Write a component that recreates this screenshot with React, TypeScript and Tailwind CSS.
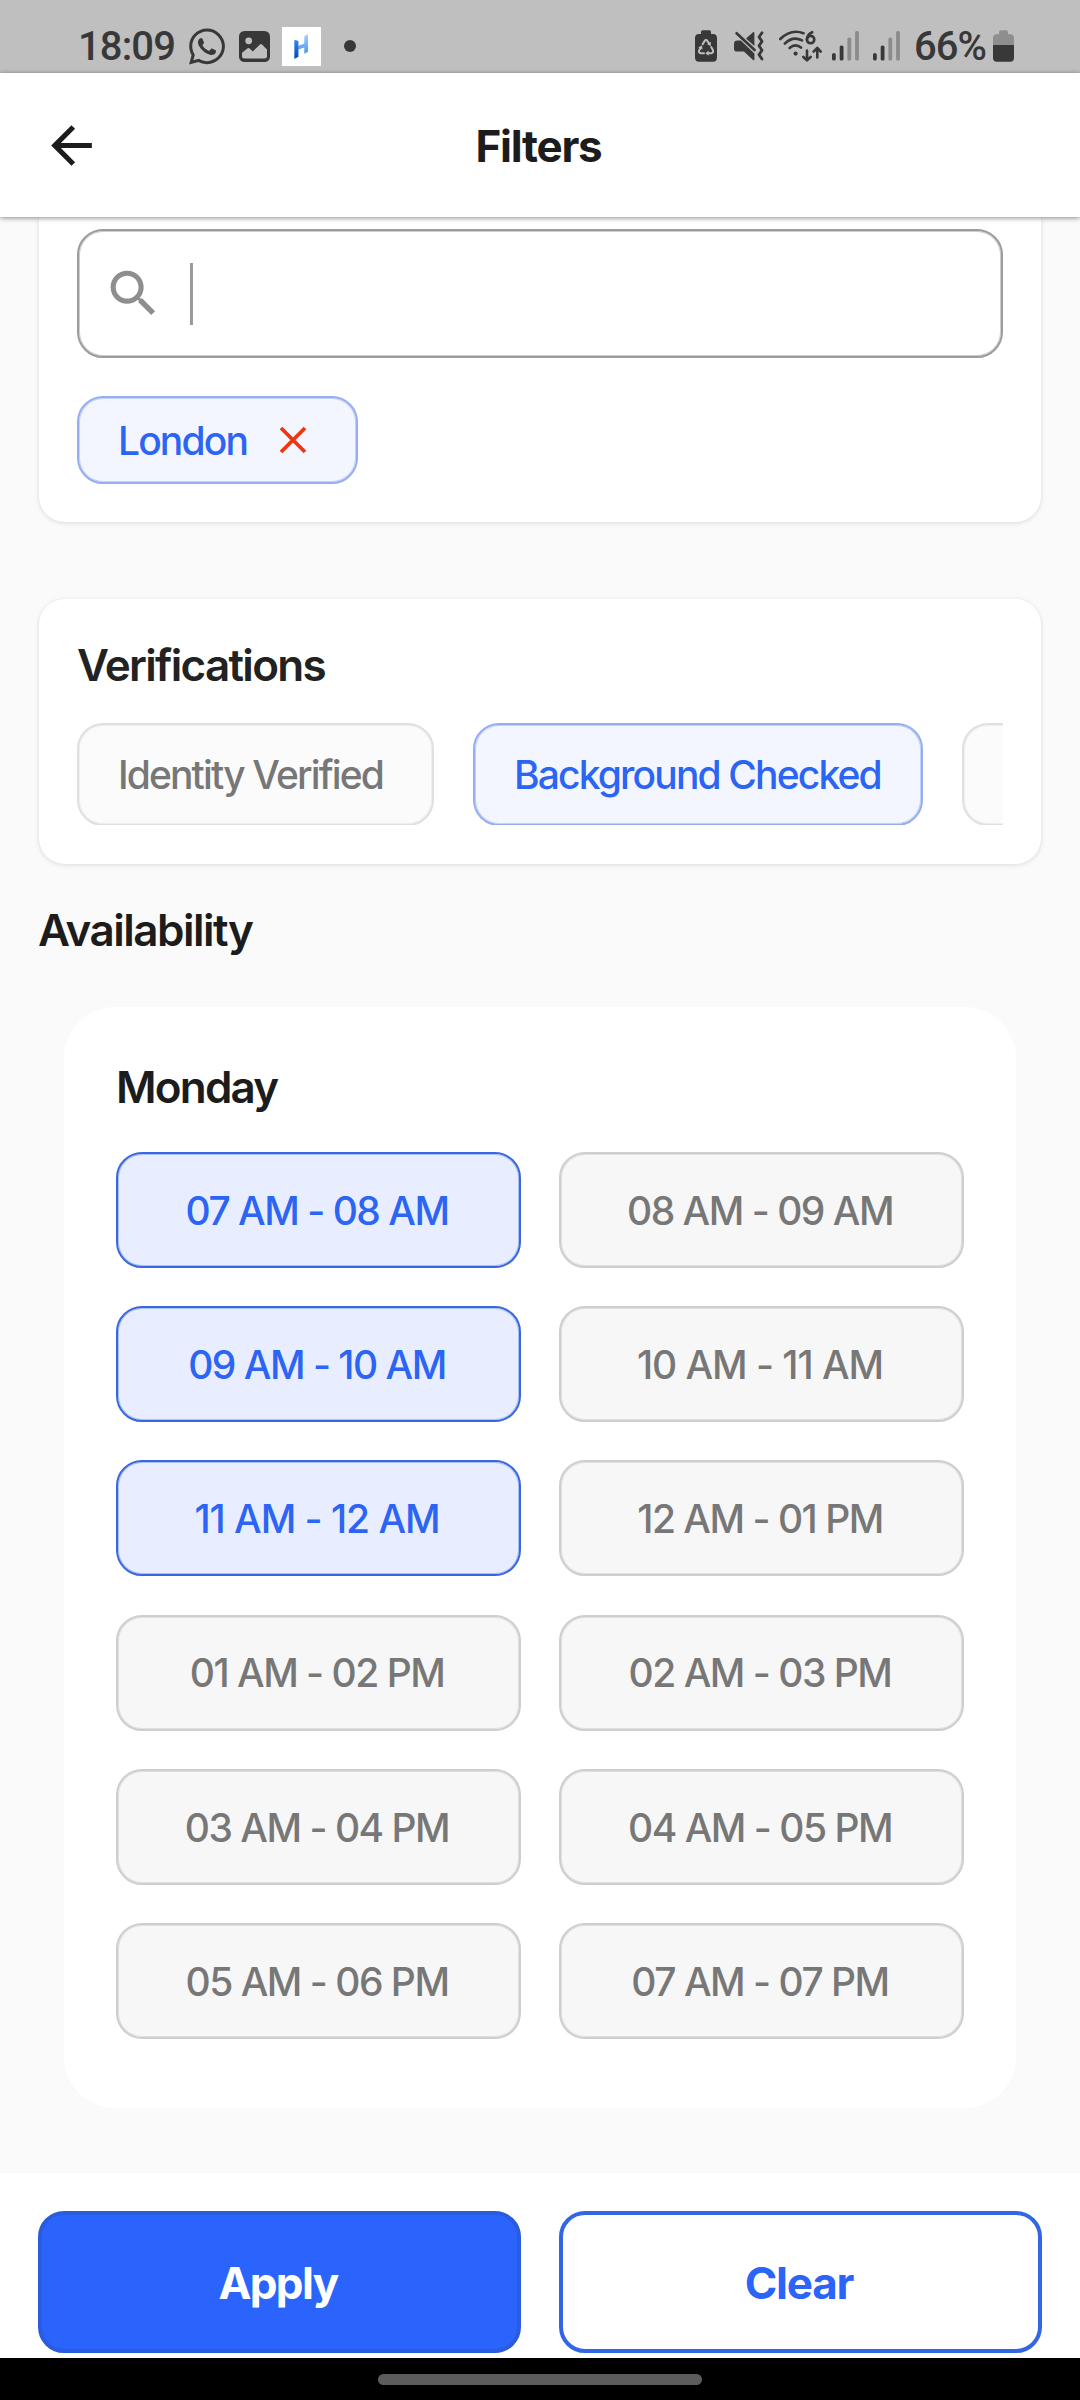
import { FaWhatsapp } from "react-icons/fa6";

type Slot = { label: string; selected?: boolean; loose?: boolean };

const slots: Slot[] = [
  { label: "07 AM - 08 AM", selected: true },
  { label: "08 AM - 09 AM" },
  { label: "09 AM - 10 AM", selected: true },
  { label: "10 AM - 11 AM", loose: true },
  { label: "11 AM - 12 AM", selected: true, loose: true },
  { label: "12 AM - 01 PM" },
  { label: "01 AM - 02 PM" },
  { label: "02 AM - 03 PM" },
  { label: "03 AM - 04 PM" },
  { label: "04 AM - 05 PM" },
  { label: "05 AM - 06 PM" },
  { label: "07 AM - 07 PM" },
];

function ImageIcon() {
  return (
    <svg className="ml-[14px] h-[31px] w-[31px]" viewBox="0 0 31 31">
      <rect width="31" height="31" rx="5.5" fill="#383838" />
      <circle cx="9.7" cy="9.8" r="3.4" fill="#bfbfbf" />
      <path
        d="M3 21.8 L8.6 17.2 Q9.6 16.6 10.6 17.4 L13.8 20.4 L21 13.4 Q22 12.6 23 13.4 L28 18.5 V25 Q28 27.5 25.5 27.5 H5.5 Q3 27.5 3 25 Z"
        fill="#bfbfbf"
      />
    </svg>
  );
}

function AppLogo() {
  return (
    <div className="ml-3 flex h-[39px] w-[39px] items-center justify-center bg-white">
      <svg className="h-[39px] w-[39px]" viewBox="0 0 39 39">
        <defs>
          <linearGradient id="logoLeft" x1="0" y1="0" x2="0" y2="1">
            <stop offset="0" stopColor="#2f86ee" />
            <stop offset="1" stopColor="#0b47b0" />
          </linearGradient>
          <linearGradient id="logoRight" x1="0" y1="0" x2="0" y2="1">
            <stop offset="0" stopColor="#a8d2fb" />
            <stop offset="1" stopColor="#2f86ee" />
          </linearGradient>
        </defs>
        <path d="M22.3 9.2 L26 7 V24.8 L22.3 26.8 V20.6 L16.3 22.6 V29.8 L12.5 31.8 V13 L16.3 14 V18.8 L22.3 16.4 Z" fill="url(#logoRight)" />
        <path d="M12.5 13 L16.3 14 V29.8 L12.5 31.8 Z" fill="url(#logoLeft)" />
      </svg>
    </div>
  );
}

function RecycleBattery() {
  return (
    <svg className="h-8 w-[22px]" viewBox="0 0 22 32">
      <path d="M6 4 V2 Q6 0.3 7.7 0.3 H14.3 Q16 0.3 16 2 V4 H18 Q22 4 22 8 V27.5 Q22 31.7 18 31.7 H4 Q0 31.7 0 27.5 V8 Q0 4 4 4 Z" fill="#383838" />
      <g fill="none" stroke="#bfbfbf" strokeWidth="2" strokeLinecap="round" strokeLinejoin="round">
        <path d="M7.6 14.3 L9.6 10.9 Q11 9 12.4 10.9 L14.4 14.2" />
        <path d="M16.2 17 L18 20.2 Q18.6 23 16.2 23.2 H12.6" />
        <path d="M9 23.2 H5.8 Q3.2 22.8 4.2 20.2 L5.9 17.2" />
      </g>
      <path d="M15.9 11.8 L15.7 16 L12.2 14.2 Z M13.6 20.6 V25.8 L10.4 23.2 Z M3.2 17.6 L6.9 15.6 L7.6 19.6 Z" fill="#bfbfbf" />
    </svg>
  );
}

function MuteVibrate() {
  return (
    <svg className="ml-[17px] h-[30px] w-[30px]" viewBox="0 0 30 30">
      <path d="M0 13 Q0 9.6 3.4 9.6 H6.8 L20.4 22.4 V28.6 Q20.2 29.8 19 29 L10 20.6 H3.4 Q0 20.6 0 17.4 Z" fill="#383838" />
      <path d="M12 7.6 L18.8 1.4 Q20.2 0.4 20.4 1.8 V15 Z" fill="#383838" />
      <path d="M2.6 2.2 L20.6 19" stroke="#383838" strokeWidth="2.6" strokeLinecap="round" />
      <path d="M28 1.8 L25 6 L28 10.4 L25 14.8 L28 19.2 L25 23.6 L28 28" fill="none" stroke="#383838" strokeWidth="2.8" strokeLinecap="round" strokeLinejoin="round" />
    </svg>
  );
}

function WifiSix() {
  return (
    <svg className="ml-[15px] h-8 w-[43px]" viewBox="0 0 43 32">
      <g fill="none" stroke="#383838" strokeWidth="2.6" strokeLinecap="round" strokeLinejoin="round">
        <path d="M1.3 9 Q12 -1.6 24.5 3.2" />
        <path d="M5.8 13.6 Q14 5.6 23 10.4" />
        <path d="M10.6 18 Q16.5 13 22 17.6" />
        <path d="M33.2 2.2 Q28 4.5 28 9.6" />
        <circle cx="31.6" cy="9.6" r="3.7" />
        <path d="M28 20.6 V30 M24.4 27 L28 30.4 L31.6 27" />
        <path d="M38.3 27.4 V18.4 M34.6 21.6 L38.3 18 L41.7 21.6" />
      </g>
      <circle cx="16.6" cy="23.6" r="2.1" fill="#383838" />
    </svg>
  );
}

function Signal({ className }: { className: string }) {
  return (
    <svg className={className} viewBox="0 0 27 30">
      <rect x="0" y="22" width="3.8" height="7.6" rx="1.9" fill="#383838" />
      <rect x="7.7" y="14.4" width="3.8" height="15.2" rx="1.6" fill="#383838" />
      <rect x="15.4" y="6.6" width="3.8" height="23" rx="1.6" fill="#8b8b8b" />
      <rect x="23.1" y="0" width="3.8" height="29.6" rx="1.6" fill="#8b8b8b" />
    </svg>
  );
}

function Battery() {
  return (
    <svg className="ml-2 h-8 w-[21px]" viewBox="0 0 21 32">
      <path d="M0 15 V8 Q0 4.2 3.8 4.2 H6 V2.3 Q6 0.3 8 0.3 H13 Q15 0.3 15 2.3 V4.2 H17.2 Q21 4.2 21 8 V15 Z" fill="#8e8e8e" />
      <path d="M0 15 H21 V28 Q21 31.7 17.2 31.7 H3.8 Q0 31.7 0 28 Z" fill="#383838" />
    </svg>
  );
}

function StatusBar() {
  return (
    <div className="flex h-[73px] shrink-0 items-center bg-[#bfbfbf] pt-[19px] pr-[66px] pl-[78px] font-['Roboto',sans-serif] text-[40px] leading-[54px] font-medium text-[#383838]">
      <span className="w-[111px] pt-[2px] leading-[52px] tracking-[-0.9px]">18:09</span>
      <FaWhatsapp className="h-[41px] w-[36px]" />
      <ImageIcon />
      <AppLogo />
      <span className="ml-[23px] h-3 w-3 rounded-full bg-[#383838]" />
      <div className="ml-auto flex items-center">
        <RecycleBattery />
        <MuteVibrate />
        <WifiSix />
        <Signal className="ml-[10px] h-[30px] w-[27px]" />
        <Signal className="ml-[14px] h-[30px] w-[27px]" />
        <span className="ml-[14px] w-[71px] pt-[2px] leading-[52px] tracking-[-1px]">66%</span>
        <Battery />
      </div>
    </div>
  );
}

function Header() {
  return (
    <header className="relative z-10 grid h-[144px] shrink-0 grid-cols-[1fr_auto_1fr] items-center bg-white shadow-[0_1px_5px_rgba(0,0,0,0.45)]">
      <svg className="ml-[41px] h-[61px] w-[61px]" viewBox="0 0 24 24" fill="#1c1c1c">
        <path d="M20 11H7.83l5.59-5.59L12 4l-8 8 8 8 1.41-1.41L7.83 13H20v-2z" />
      </svg>
      <h1 className="pt-[2px] pr-[3px] text-[44px] leading-[54px] font-bold tracking-[-1.25px] text-[#1c1c1c]">Filters</h1>
    </header>
  );
}

function Chip({ label, selected, className }: { label: string; selected?: boolean; className: string }) {
  return (
    <button
      className={
        (selected
          ? "h-[103px] shrink-0 rounded-[26px] border-2 border-[#94aef0] bg-[#f3f6ff] pt-[2px] pl-[39px] text-left text-[39px] font-medium tracking-[-1.85px] whitespace-nowrap text-[#2c64f4] shadow-[inset_0_0_0_1px_#c3d1f8] "
          : "h-[103px] shrink-0 rounded-[26px] border-2 border-[#e0e0e0] bg-[#fbfbfb] pt-[2px] pl-[39px] text-left text-[39px] font-medium tracking-[-1.87px] whitespace-nowrap text-[#777777] shadow-[inset_0_0_0_1px_#eeeeee] ") + className
      }
    >
      {label}
    </button>
  );
}

function LocationCard() {
  return (
    <section className="mx-[39px] h-[305px] rounded-b-[26px] bg-white px-[38px] pt-3 shadow-[0_1px_5px_rgba(0,0,0,0.13)]">
      <div className="flex h-[129px] items-center rounded-[26px] border-2 border-[#9b9b9b] pl-[24px] shadow-[inset_0_0_0_1px_#cdcdcd]">
        <svg className="h-[61px] w-[61px]" viewBox="0 0 24 24" fill="#8e8e8e">
          <path d="M15.5 14h-.79l-.28-.27C15.41 12.59 16 11.11 16 9.5 16 5.91 13.09 3 9.5 3S3 5.91 3 9.5 5.91 16 9.5 16c1.61 0 3.09-.59 4.23-1.57l.27.28v.79l5 4.99L20.49 19l-4.99-5zm-6 0C7.01 14 5 11.99 5 9.5S7.01 5 9.5 5 14 7.01 14 9.5 11.99 14 9.5 14z" />
        </svg>
        <span className="ml-[26px] h-[62px] w-[2.5px] bg-[#9b9b9b]" />
      </div>
      <div className="mt-[38px] flex h-[88px] w-[281px] items-center rounded-[26px] border-2 border-[#94aef0] bg-[#f3f6ff] pl-[39px] text-[39px] font-medium tracking-[-1.87px] text-[#2c64f4] shadow-[inset_0_0_0_1px_#c3d1f8]">
        <span className="pt-[3px]">London</span>
        <svg className="ml-[32px] h-[28px] w-[28px]" viewBox="0 0 28 28">
          <path d="M2 2 L26 26 M26 2 L2 26" stroke="#f2330f" strokeWidth="3.8" />
        </svg>
      </div>
    </section>
  );
}

function VerificationsCard() {
  return (
    <section className="mx-[39px] mt-[77px] h-[265px] rounded-[26px] bg-white px-[38px] pt-[39px] shadow-[0_1px_5px_rgba(0,0,0,0.13)]">
      <h2 className="text-[44px] leading-[54px] font-semibold tracking-[-1.7px] text-[#222222]">Verifications</h2>
      <div className="mt-[31px] flex h-[102px] gap-[39px] overflow-hidden">
        <Chip label="Identity Verified" className="w-[357px]" />
        <Chip label="Background Checked" selected className="w-[450px]" />
        <Chip label="" className="w-[300px]" />
      </div>
    </section>
  );
}

function AvailabilityCard() {
  return (
    <section className="mx-[64px] mt-[50px] h-[1101px] rounded-[51px] bg-white px-[52px] pt-[53px]">
      <h3 className="text-[44px] leading-[54px] font-semibold tracking-[-1.8px] text-[#1c1c1c]">Monday</h3>
      <div className="mt-[38px] grid grid-cols-[405px_405px] gap-x-[38px] gap-y-[38.2px]">
        {slots.map((slot) => (
          <button
            key={slot.label}
            className={
              slot.selected
                ? "h-[116px] rounded-[26px] border-2 border-[#3a67dd] bg-[#e8eeff] pt-[2px] pr-[3px] text-[39px] font-medium text-[#2c64f4] shadow-[inset_0_0_0_1px_#a9bff8]"
                : "h-[116px] rounded-[26px] border-2 border-[#cecece] bg-[#f7f7f7] pt-[2px] pr-[3px] text-[39px] font-medium text-[#777777] shadow-[inset_0_0_0_1px_#e0e0e0]"
            }
          >
            <span className={slot.loose ? "tracking-[-1.05px]" : "tracking-[-1.5px]"}>{slot.label}</span>
          </button>
        ))}
      </div>
    </section>
  );
}

export default function App() {
  return (
    <div className="flex h-[2400px] w-[1080px] flex-col overflow-hidden bg-[#fafafa] font-['Inter',sans-serif]">
      <StatusBar />
      <Header />
      <main className="flex-1 overflow-hidden">
        <LocationCard />
        <VerificationsCard />
        <h2 className="mt-[39px] ml-[38px] text-[44px] leading-[54px] font-semibold tracking-[-1.5px] text-[#1c1c1c]">Availability</h2>
        <AvailabilityCard />
      </main>
      <footer className="grid h-[185px] shrink-0 grid-cols-2 gap-[38px] bg-white px-[38px] pt-[38px]">
        <button className="h-[142px] rounded-[26px] border-4 border-[#2a5cdf] bg-[#2b64fd] pt-[2px] pr-[3px] text-[44px] font-bold tracking-[-1.6px] text-white">
          Apply
        </button>
        <button className="h-[142px] rounded-[26px] border-4 border-[#3366e6] bg-white pt-[2px] pr-[3px] text-[44px] font-bold tracking-[-1.2px] text-[#2b64f8]">
          Clear
        </button>
      </footer>
      <div className="flex h-[42px] shrink-0 justify-center bg-black pt-4">
        <div className="h-[11px] w-[324px] rounded-full bg-[#5c5c5c]" />
      </div>
    </div>
  );
}
